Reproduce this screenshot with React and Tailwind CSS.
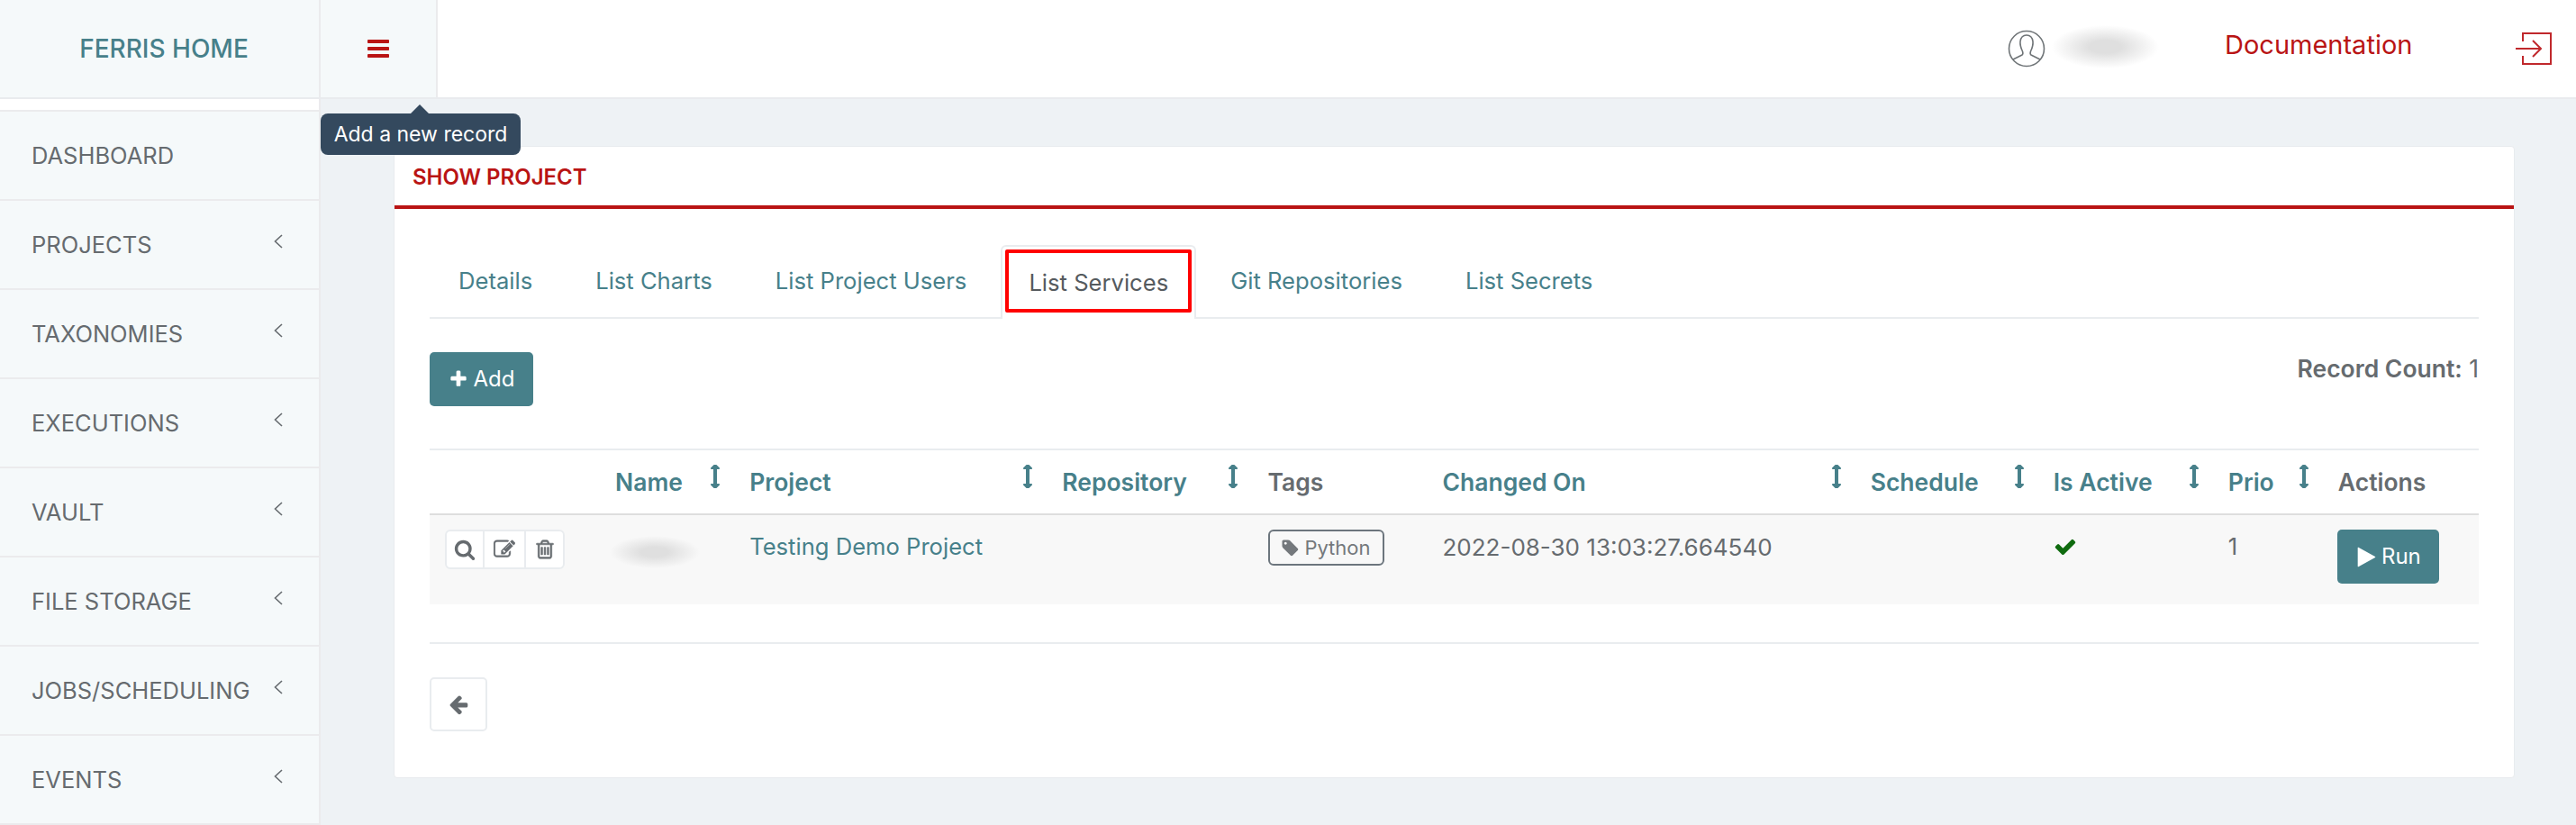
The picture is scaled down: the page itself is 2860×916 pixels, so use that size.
const menu = ["PROJECTS", "TAXONOMIES", "EXECUTIONS", "VAULT", "FILE STORAGE", "JOBS/SCHEDULING", "EVENTS"];
const tabs = ["Details", "List Charts", "List Project Users", "List Services", "Git Repositories", "List Secrets"];
const columns = [
    { name: "", width: "w-[190px]" },
    { name: "Name", width: "w-[149px]", sort: true },
    { name: "Project", width: "w-[347px]", sort: true },
    { name: "Repository", width: "w-[228px]", sort: true },
    { name: "Tags", width: "w-[194px]" },
    { name: "Changed On", width: "w-[475px]", sort: true },
    { name: "Schedule", width: "w-[203px]", sort: true },
    { name: "Is Active", width: "w-[194px]", sort: true },
    { name: "Prio", width: "w-[122px]", sort: true },
    { name: "Actions", width: "w-[172px]" },
];

// font-awesome 4 glyphs, the fa package only has the v5 shapes
const icons = {
    bars: "M1664 1344v128q0 26-19 45t-45 19h-1408q-26 0-45-19t-19-45v-128q0-26 19-45t45-19h1408q26 0 45 19t19 45zm0-512v128q0 26-19 45t-45 19h-1408q-26 0-45-19t-19-45v-128q0-26 19-45t45-19h1408q26 0 45 19t19 45zm0-512v128q0 26-19 45t-45 19h-1408q-26 0-45-19t-19-45v-128q0-26 19-45t45-19h1408q26 0 45 19t19 45z",
    plus: "M1600 736v192q0 40-28 68t-68 28h-416v416q0 40-28 68t-68 28h-192q-40 0-68-28t-28-68v-416h-416q-40 0-68-28t-28-68v-192q0-40 28-68t68-28h416v-416q0-40 28-68t68-28h192q40 0 68 28t28 68v416h416q40 0 68 28t28 68z",
    check: "M1671 566q0 40-28 68l-724 724-136 136q-28 28-68 28t-68-28l-136-136-362-362q-28-28-28-68t28-68l136-136q28-28 68-28t68 28l294 295 656-657q28-28 68-28t68 28l136 136q28 28 28 68z",
    left: "M1664 896v128q0 53-32.500 90.500t-84.500 37.500h-704l293 294q38 36 38 90t-38 90l-75 76q-37 37-90 37-52 0-91-37l-651-652q-37-37-37-90 0-52 37-91l651-650q38-38 91-38 52 0 90 38l75 74q38 38 38 91t-38 91l-293 293h704q52 0 84.500 37.500t32.500 90.500z",
    search: "M1216 832q0-185-131.500-316.500t-316.500-131.500-316.500 131.500-131.500 316.500 131.500 316.500 316.500 131.500 316.500-131.500 131.500-316.500zm512 832q0 52-38 90t-90 38q-54 0-90-38l-343-342q-179 124-399 124-143 0-273.500-55.500t-225-150-150-225-55.500-273.500 55.500-273.500 150-225 225-150 273.500-55.500 273.500 55.500 225 150 150 225 55.500 273.500q0 220-124 399l343 343q37 37 37 90z",
    trash: "M704 736v576q0 14-9 23t-23 9h-64q-14 0-23-9t-9-23v-576q0-14 9-23t23-9h64q14 0 23 9t9 23zm256 0v576q0 14-9 23t-23 9h-64q-14 0-23-9t-9-23v-576q0-14 9-23t23-9h64q14 0 23 9t9 23zm256 0v576q0 14-9 23t-23 9h-64q-14 0-23-9t-9-23v-576q0-14 9-23t23-9h64q14 0 23 9t9 23zm128 724v-948h-896v948q0 22 7 40.500t14.500 27 10.500 8.500h832q3 0 10.500-8.500t14.500-27 7-40.500zm-672-1076h448l-48-117q-7-9-17-11h-317q-10 2-17 11zm928 32v64q0 14-9 23t-23 9h-96v948q0 83-47 143.500t-113 60.500h-832q-66 0-113-58.500t-47-141.500v-952h-96q-14 0-23-9t-9-23v-64q0-14 9-23t23-9h309l70-167q15-37 54-63t79-26h320q40 0 79 26t54 63l70 167h309q14 0 23 9t9 23z",
    play: "M1576 927l-1328 738q-23 13-39.500 3t-16.500-36v-1472q0-26 16.500-36t39.500 3l1328 738q23 13 23 31t-23 31z",
    edit: "M888 1184l116-116-152-152-116 116v56h96v96h56zm440-720q-16-16-33 1l-350 350q-17 17-1 33t33-1l350-350q17-17 1-33zm80 594v190q0 119-84.500 203.500t-203.500 84.500h-832q-119 0-203.500-84.500t-84.500-203.500v-832q0-119 84.500-203.500t203.500-84.500h832q63 0 117 25 15 7 18 23 3 17-9 29l-49 49q-14 14-32 8-23-6-45-6h-832q-66 0-113 47t-47 113v832q0 66 47 113t113 47h832q66 0 113-47t47-113v-126q0-13 9-22l64-64q15-15 35-7t20 29zm-96-738l288 288-672 672h-288v-288zm444 132l-92 92-288-288 92-92q28-28 68-28t68 28l152 152q28 28 28 68t-28 68z",
    tag: "M576 448q0-53-37.500-90.500t-90.500-37.500-90.500 37.500-37.500 90.500 37.500 90.500 90.500 37.500 90.500-37.500 37.500-90.500zm1067 576q0 53-37 90l-491 492q-39 37-91 37-53 0-90-37l-715-716q-38-37-64.500-101t-26.500-117v-416q0-52 38-90t90-38h416q53 0 117 26.500t102 64.500l715 714q37 39 37 91z",
    sort: "M1216 320q0 26-19 45t-45 19h-128v1024h128q26 0 45 19t19 45-19 45l-256 256q-19 19-45 19t-45-19l-256-256q-19-19-19-45t19-45 45-19h128v-1024h-128q-26 0-45-19t-19-45 19-45l256-256q19-19 45-19t45 19l256 256q19 19 19 45z",
};

function Fa({ name, className, viewBox = "0 0 1792 1792" }) {
    return <svg viewBox={viewBox} fill="currentColor" className={className}><path d={icons[name]} /></svg>;
}

function Blur({ className }) {
    return <div className={`bg-[radial-gradient(ellipse_closest-side,#dfdfdf_30%,#ffffff00_100%)] ${className}`} />;
}

function Chevron() {
    return <svg width="12" height="16" viewBox="0 0 12 16" className="mt-[-10px] mr-[39px] text-[#666b6f]" fill="none" stroke="currentColor" strokeWidth="1.6">
        <path d="M10 1 L2.5 8 L10 15" />
    </svg>;
}

function MenuItem({ label, arrow }) {
    return <div className="h-[99px] border-b-2 border-[#ebebed] flex items-center justify-between pl-[35px] pt-[2px] text-[25.5px] text-[#666b6f]">
        {label}
        {arrow && <Chevron />}
    </div>;
}

export default function App() {
    return <div className="w-[2860px] h-[916px] overflow-hidden relative flex flex-col bg-[#eef2f5] text-[25.6px] text-[#666b6f] font-['Inter',sans-serif]">
        <header className="h-[110px] shrink-0 flex bg-white border-b-2 border-[#e9ebee]">
            <div className="w-[356px] border-r-2 border-[#ebebed] bg-[#f5f9fa] flex items-center justify-center pl-[10px] font-medium text-[#47808a] text-[28px]">FERRIS HOME</div>
            <div className="w-[130px] border-r-2 border-[#ebebed] bg-[#f5f9fa] flex items-center justify-center">
                <Fa name="bars" className="w-[28px] h-[28px] text-[#b91414]" />
            </div>
            <div className="flex-1 flex items-center">
                <svg width="42" height="42" viewBox="0 0 42 42" fill="none" stroke="#6f7477" strokeWidth="1.6" className="ml-[1743px]">
                    <ellipse cx="21" cy="21" rx="19.5" ry="19.5" />
                    <path d="M6 33 L16 28 Q17.500 27 16.500 24 Q13.500 18 14 13 Q15 6 21 6 Q27 6 28 13 Q28.500 18 25.500 24 Q24.500 27 26 28 L36 33" />
                </svg>
                <Blur className="w-[119px] h-[48px] ml-[7px] -mt-[4px]" />
                <div className="ml-[73px] text-[29px] text-[#b91414] w-[322px] -mt-[8px]">Documentation</div>
                <svg width="42" height="36" viewBox="0 0 42 36" fill="none" stroke="#c0282c" strokeWidth="2">
                    <path d="M9 10 V1 H40 V35 H9 V26" />
                    <path d="M1 18 H28 M20 9 L29 18 L20 27" />
                </svg>
            </div>
        </header>
        <div className="flex-1 flex min-h-0">
            <aside className="w-[356px] shrink-0 border-r-2 border-[#ebebed] bg-[#f5f9fa]">
                <div className="h-[14px] bg-white border-b-2 border-[#ebebed]" />
                <MenuItem label="DASHBOARD" />
                {menu.map(m => <MenuItem key={m} label={m} arrow />)}
            </aside>
            <main className="flex-1 pl-[81px] pr-[68px] pt-[52px]">
                <div className="h-[702px] bg-white border border-[#e8ebee] rounded-[4px]">
                    <div className="h-[69px] border-b-4 border-[#b91414] pl-[20px] pt-[2px] flex items-center text-[24px] font-semibold text-[#b91414]">SHOW PROJECT</div>
                    <div className="pl-[39px] pr-[39px] pt-[40px]">
                        <div className="flex h-[82px] border-b-2 border-[#e9ecef]">
                            {tabs.map(t => {
                                if (t === "List Services") {
                                    return <div key={t} className="relative h-[82px] mr-[6px] px-[29px] pt-[1px] flex items-center border-2 border-b-0 border-[#e9ecef] bg-white rounded-t-[6px] text-[#555a5e] -mb-[2px]">
                                        {t}
                                        <div className="absolute left-[3px] right-[3px] top-[3px] h-[70px] border-4 border-[#ff0000] rounded-[2px]" />
                                    </div>;
                                }
                                return <div key={t} className="h-[80px] mr-[6px] px-[32px] pt-[1px] flex items-center text-[#47808a]">{t}</div>;
                            })}
                        </div>
                        <div className="flex justify-between items-start pt-[37px]">
                            <button className="w-[115px] h-[60px] rounded-[5px] bg-[#47808a] text-white flex items-center justify-center gap-[6px] text-[24px]">
                                <Fa name="plus" className="w-[22px] h-[22px]" /> Add
                            </button>
                            <div className="-mt-[1px] text-[26.5px] text-[#666b6f]"><span className="font-semibold">Record Count:</span> 1</div>
                        </div>
                        <table className="mt-[47px] w-full table-fixed border-collapse">
                            <thead>
                                <tr className="border-t-2 border-b-2 border-t-[#e9ecef] border-b-[#dedede]">
                                    {columns.map(c => <th key={c.name} className={`${c.width} h-[72px] px-[16px] text-left text-[26.5px] font-semibold align-top`}>
                                        <div className="flex justify-between items-start pt-[16px]">
                                            <span className={c.sort ? "text-[#47808a]" : "text-[#666b6f]"}>{c.name}</span>
                                            {c.sort && <Fa name="sort" className="w-[10px] h-[26px] mr-[1px] text-[#47808a]" viewBox="576 64 640 1664" />}
                                        </div>
                                    </th>)}
                                </tr>
                            </thead>
                            <tbody>
                                <tr className="bg-[#f8f8f8] h-[100px] align-top">
                                    <td className="pl-[17px] pt-[16px]">
                                        <div className="inline-flex h-[44px] bg-white border-2 border-[#e9ecef] rounded-[6px]">
                                            <div className="w-[42px] flex items-center justify-center border-r-2 border-[#e9ecef]"><Fa name="search" className="w-[24px] h-[24px]" /></div>
                                            <div className="w-[46px] flex items-center justify-center border-r-2 border-[#e9ecef]"><Fa name="edit" className="w-[24px] h-[24px] stroke-current stroke-[30]" /></div>
                                            <div className="w-[41px] flex items-center justify-center"><Fa name="trash" className="w-[24px] h-[24px] stroke-current stroke-[40]" /></div>
                                        </div>
                                    </td>
                                    <td className="pt-[23px] pl-[10px]"><Blur className="w-[100px] h-[36px]" /></td>
                                    <td className="px-[16px] pt-[16px] text-[#47808a]">Testing Demo Project</td>
                                    <td />
                                    <td className="pl-[17px] pr-[16px] pt-[16px]">
                                        <div className="inline-flex items-center h-[40px] w-[129px] pl-[12px] gap-[5px] border-2 border-[#6c757d] rounded-[6px] text-[22px] text-[#74787c]">
                                            <Fa name="tag" className="w-[21px] h-[21px]" />Python
                                        </div>
                                    </td>
                                    <td className="px-[16px] pt-[16px] text-[26px]">2022-08-30 13:03:27.664540</td>
                                    <td />
                                    <td className="px-[16px] pt-[22px]"><Fa name="check" className="w-[26px] h-[26px] text-[#0f6b0f]" /></td>
                                    <td className="px-[16px] pt-[16px]">1</td>
                                    <td className="px-[15px] pt-[16px]">
                                        <button className="w-[113px] h-[60px] rounded-[5px] bg-[#47808a] text-white flex items-center justify-center gap-[4px] text-[24px]">
                                            <Fa name="play" className="w-[25px] h-[25px]" /> Run
                                        </button>
                                    </td>
                                </tr>
                            </tbody>
                        </table>
                        <div className="mt-[42px] border-t-2 border-[#e9ecef] pt-[37px]">
                            <button className="w-[64px] h-[60px] bg-white border-2 border-[#e9ecef] rounded-[5px] flex items-center justify-center">
                                <Fa name="left" className="w-[24px] h-[24px]" />
                            </button>
                        </div>
                    </div>
                </div>
            </main>
        </div>
        <div className="absolute left-[356px] top-[126px] w-[222px] h-[46px] rounded-[8px] bg-[#34495e] text-white text-[23px] flex items-center justify-center">
            Add a new record
            <div className="absolute left-[100px] -top-[10px] w-0 h-0 border-x-[10px] border-x-transparent border-b-[10px] border-b-[#34495e]" />
        </div>
    </div>;
}
